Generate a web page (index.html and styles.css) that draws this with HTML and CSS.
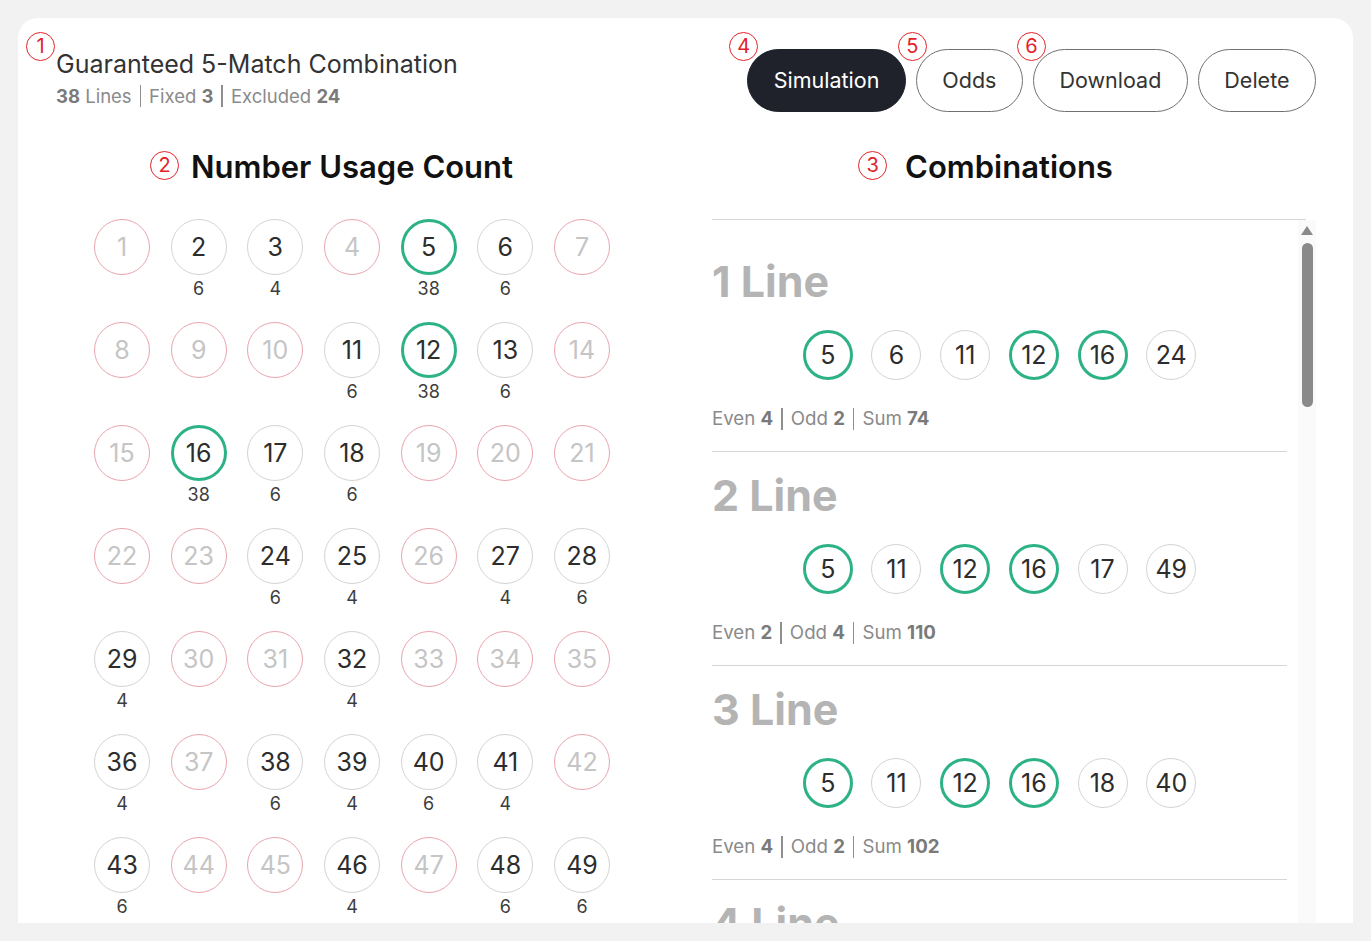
FILE: index.html
```html
<!DOCTYPE html>
<html lang="en">
<head>
<meta charset="utf-8">
<title>Guaranteed 5-Match Combination</title>
<link rel="stylesheet" href="styles.css">
</head>
<body>
<div class="card">
  <header class="top">
    <div class="title-block">
      <span class="mark mark-title">1</span>
      <h1 class="title">Guaranteed 5-Match Combination</h1>
      <div class="meta"><b>38</b>&nbsp;Lines<i class="sep"></i>Fixed&nbsp;<b>3</b><i class="sep"></i>Excluded&nbsp;<b>24</b></div>
    </div>
    <div class="actions">
      <button class="btn btn-dark"><span class="mark mark-btn">4</span>Simulation</button>
      <button class="btn"><span class="mark mark-btn">5</span>Odds</button>
      <button class="btn"><span class="mark mark-btn mark-btn6">6</span>Download</button>
      <button class="btn">Delete</button>
    </div>
  </header>

  <main class="cols">
    <section class="usage">
      <h2 class="sec-title"><span class="mark mark-usage">2</span>Number Usage Count</h2>
      <div class="grid">
        <div class="cell"><div class="ball ex">1</div><div class="cnt"></div></div>
        <div class="cell"><div class="ball">2</div><div class="cnt">6</div></div>
        <div class="cell"><div class="ball">3</div><div class="cnt">4</div></div>
        <div class="cell"><div class="ball ex">4</div><div class="cnt"></div></div>
        <div class="cell"><div class="ball fix">5</div><div class="cnt">38</div></div>
        <div class="cell"><div class="ball">6</div><div class="cnt">6</div></div>
        <div class="cell"><div class="ball ex">7</div><div class="cnt"></div></div>

        <div class="cell"><div class="ball ex">8</div><div class="cnt"></div></div>
        <div class="cell"><div class="ball ex">9</div><div class="cnt"></div></div>
        <div class="cell"><div class="ball ex">10</div><div class="cnt"></div></div>
        <div class="cell"><div class="ball">11</div><div class="cnt">6</div></div>
        <div class="cell"><div class="ball fix">12</div><div class="cnt">38</div></div>
        <div class="cell"><div class="ball">13</div><div class="cnt">6</div></div>
        <div class="cell"><div class="ball ex">14</div><div class="cnt"></div></div>

        <div class="cell"><div class="ball ex">15</div><div class="cnt"></div></div>
        <div class="cell"><div class="ball fix">16</div><div class="cnt">38</div></div>
        <div class="cell"><div class="ball">17</div><div class="cnt">6</div></div>
        <div class="cell"><div class="ball">18</div><div class="cnt">6</div></div>
        <div class="cell"><div class="ball ex">19</div><div class="cnt"></div></div>
        <div class="cell"><div class="ball ex">20</div><div class="cnt"></div></div>
        <div class="cell"><div class="ball ex">21</div><div class="cnt"></div></div>

        <div class="cell"><div class="ball ex">22</div><div class="cnt"></div></div>
        <div class="cell"><div class="ball ex">23</div><div class="cnt"></div></div>
        <div class="cell"><div class="ball">24</div><div class="cnt">6</div></div>
        <div class="cell"><div class="ball">25</div><div class="cnt">4</div></div>
        <div class="cell"><div class="ball ex">26</div><div class="cnt"></div></div>
        <div class="cell"><div class="ball">27</div><div class="cnt">4</div></div>
        <div class="cell"><div class="ball">28</div><div class="cnt">6</div></div>

        <div class="cell"><div class="ball">29</div><div class="cnt">4</div></div>
        <div class="cell"><div class="ball ex">30</div><div class="cnt"></div></div>
        <div class="cell"><div class="ball ex">31</div><div class="cnt"></div></div>
        <div class="cell"><div class="ball">32</div><div class="cnt">4</div></div>
        <div class="cell"><div class="ball ex">33</div><div class="cnt"></div></div>
        <div class="cell"><div class="ball ex">34</div><div class="cnt"></div></div>
        <div class="cell"><div class="ball ex">35</div><div class="cnt"></div></div>

        <div class="cell"><div class="ball">36</div><div class="cnt">4</div></div>
        <div class="cell"><div class="ball ex">37</div><div class="cnt"></div></div>
        <div class="cell"><div class="ball">38</div><div class="cnt">6</div></div>
        <div class="cell"><div class="ball">39</div><div class="cnt">4</div></div>
        <div class="cell"><div class="ball">40</div><div class="cnt">6</div></div>
        <div class="cell"><div class="ball">41</div><div class="cnt">4</div></div>
        <div class="cell"><div class="ball ex">42</div><div class="cnt"></div></div>

        <div class="cell"><div class="ball">43</div><div class="cnt">6</div></div>
        <div class="cell"><div class="ball ex">44</div><div class="cnt"></div></div>
        <div class="cell"><div class="ball ex">45</div><div class="cnt"></div></div>
        <div class="cell"><div class="ball">46</div><div class="cnt">4</div></div>
        <div class="cell"><div class="ball ex">47</div><div class="cnt"></div></div>
        <div class="cell"><div class="ball">48</div><div class="cnt">6</div></div>
        <div class="cell"><div class="ball">49</div><div class="cnt">6</div></div>
      </div>
    </section>

    <section class="combos">
      <div class="combos-head">
        <h2 class="sec-title"><span class="mark mark-combo">3</span>Combinations</h2>
        <div class="rule"></div>
      </div>
      <div class="scroll">
        <div class="list">
          <article class="line">
            <h3 class="line-title">1 Line</h3>
            <div class="balls">
              <span class="cball fix">5</span><span class="cball">6</span><span class="cball">11</span><span class="cball fix">12</span><span class="cball fix">16</span><span class="cball">24</span>
            </div>
            <div class="stats">Even&nbsp;<b>4</b><i class="sep"></i>Odd&nbsp;<b>2</b><i class="sep"></i>Sum&nbsp;<b>74</b></div>
          </article>
          <article class="line">
            <h3 class="line-title">2 Line</h3>
            <div class="balls">
              <span class="cball fix">5</span><span class="cball">11</span><span class="cball fix">12</span><span class="cball fix">16</span><span class="cball">17</span><span class="cball">49</span>
            </div>
            <div class="stats">Even&nbsp;<b>2</b><i class="sep"></i>Odd&nbsp;<b>4</b><i class="sep"></i>Sum&nbsp;<b>110</b></div>
          </article>
          <article class="line">
            <h3 class="line-title">3 Line</h3>
            <div class="balls">
              <span class="cball fix">5</span><span class="cball">11</span><span class="cball fix">12</span><span class="cball fix">16</span><span class="cball">18</span><span class="cball">40</span>
            </div>
            <div class="stats">Even&nbsp;<b>4</b><i class="sep"></i>Odd&nbsp;<b>2</b><i class="sep"></i>Sum&nbsp;<b>102</b></div>
          </article>
          <article class="line line-last">
            <h3 class="line-title">4 Line</h3>
          </article>
        </div>
        <div class="sbar">
          <span class="sbar-up"></span>
          <span class="sbar-thumb"></span>
        </div>
      </div>
    </section>
  </main>
</div>
</body>
</html>
```

FILE: styles.css
```css
* { box-sizing: border-box; }

html, body {
  margin: 0;
  padding: 0;
  background: #f2f2f2;
  font-family: Inter, "Noto Sans", "Liberation Sans", sans-serif;
  color: #333;
}

.card {
  margin: 18px 18px 0;
  height: 905px;
  background: #fff;
  border-radius: 20px 20px 0 0;
  overflow: hidden;
  padding: 30px 37px 0 38px;
  display: flex;
  flex-direction: column;
}

/* header */
.top {
  display: flex;
  justify-content: space-between;
  align-items: flex-start;
  flex: none;
}

.title-block {
  position: relative;
}

.title {
  margin: 0;
  font-size: 25px;
  line-height: 32px;
  font-weight: 400;
  color: #333;
}

.meta, .stats {
  display: flex;
  align-items: center;
  color: #8a8a8a;
}

.meta {
  margin-top: 4px;
  font-size: 18.5px;
  line-height: 24px;
}

.meta b, .stats b {
  font-weight: 700;
  color: #7a7a7a;
}

.sep {
  display: inline-block;
  width: 1.5px;
  height: 22px;
  background: #8f8f8f;
  margin: 0 8px;
}

.actions {
  display: flex;
  gap: 10px;
  margin-top: 1px;
}

.btn {
  position: relative;
  height: 63px;
  padding: 0 25.5px;
  border: 1px solid #707070;
  border-radius: 32px;
  background: #fff;
  color: #333;
  font-family: inherit;
  font-size: 21.5px;
  line-height: 1;
}

.btn-dark {
  background: #1f222a;
  border-color: #1f222a;
  color: #fff;
}

/* red annotation markers */
.mark {
  position: absolute;
  width: 29px;
  height: 29px;
  border: 1.5px solid #e2232a;
  border-radius: 50%;
  color: #e2232a;
  font-family: Inter, "Liberation Sans", sans-serif;
  font-size: 20px;
  font-weight: 400;
  line-height: 26px;
  text-align: center;
}

.mark-title { left: -30px; top: -16px; }
.mark-btn { left: -19px; top: -18px; }
.mark-btn6 { left: -17px; }
.mark-usage { right: calc(100% + 12px); top: 4px; }
.mark-combo { right: calc(100% + 18px); top: 4px; }

/* columns */
.cols {
  flex: 1;
  min-height: 0;
  display: grid;
  grid-template-columns: 592px 604px;
  column-gap: 64px;
  margin-top: 35px;
}

.sec-title {
  position: relative;
  margin: 0 auto;
  width: max-content;
  font-size: 31px;
  line-height: 40px;
  font-weight: 600;
  color: #111;
}

.usage {
  min-height: 0;
}

.grid {
  margin-top: 32px;
  display: grid;
  grid-template-columns: repeat(7, 56px);
  column-gap: 20.66px;
  row-gap: 21px;
  justify-content: center;
}

.cell {
  display: flex;
  flex-direction: column;
  align-items: center;
}

.ball {
  width: 56px;
  height: 56px;
  border: 1px solid #d3d3d3;
  border-radius: 50%;
  display: flex;
  align-items: center;
  justify-content: center;
  font-size: 25px;
  color: #2d2d2d;
}

.ball.ex, .cball.ex {
  border-color: #e8a4ad;
  color: #c5c5c5;
}

.ball.fix, .cball.fix {
  border: 3px solid #2db288;
}

.cnt {
  margin-top: 2px;
  height: 24px;
  font-size: 18px;
  line-height: 24px;
  color: #3d3d3d;
}

/* combinations */
.combos {
  min-height: 0;
  display: flex;
  flex-direction: column;
}

.combos-head {
  padding-right: 10px;
  flex: none;
}

.rule {
  margin-top: 32px;
  height: 1px;
  background: #d6d6d6;
}

.scroll {
  flex: 1;
  min-height: 0;
  display: flex;
  overflow: hidden;
}

.list {
  flex: 1;
  min-width: 0;
  padding: 18px 11px 0 0;
}

.line {
  padding: 15px 0 20px;
  border-bottom: 1px solid #d6d6d6;
}

.line-last {
  border-bottom: 0;
}

.line-title {
  margin: 0;
  font-size: 43px;
  line-height: 56px;
  font-weight: 700;
  color: #b4b4b4;
}

.balls {
  margin-top: 21px;
  display: flex;
  justify-content: center;
  gap: 18.7px;
}

.cball {
  width: 50px;
  height: 50px;
  border: 1px solid #d3d3d3;
  border-radius: 50%;
  display: flex;
  align-items: center;
  justify-content: center;
  font-size: 25px;
  color: #2d2d2d;
}

.stats {
  margin-top: 27px;
  font-size: 18.7px;
  line-height: 24px;
}

.sbar {
  flex: none;
  width: 18px;
  background: #fafafa;
  display: flex;
  flex-direction: column;
  align-items: center;
  padding-top: 6px;
}

.sbar-up {
  width: 0;
  height: 0;
  border-left: 6px solid transparent;
  border-right: 6px solid transparent;
  border-bottom: 9px solid #8a8a8a;
}

.sbar-thumb {
  margin-top: 8px;
  width: 11px;
  height: 164px;
  border-radius: 6px;
  background: #8a8a8a;
}
```
